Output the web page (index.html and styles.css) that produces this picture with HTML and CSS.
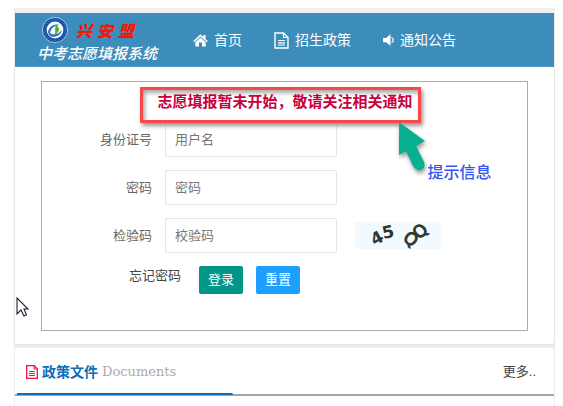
FILE: index.html
```html
<!DOCTYPE html>
<html lang="zh-CN">

<head>
    <meta charset="UTF-8">
    <meta name="viewport" content="width=device-width, initial-scale=1.0">
    <title>中考志愿填报系统</title>
    <link rel="stylesheet" href="styles.css">
</head>

<body>
    <div class="page">
        <header class="header">
            <a class="brand" href="#">
                <span class="brand-top">
                    <svg class="logo" viewBox="0 0 26 26" aria-hidden="true">
                        <circle cx="13" cy="13" r="12.6" fill="#1550a0" stroke="#dcecf8" stroke-width=".7"/>
                        <circle cx="13" cy="13" r="10.4" fill="none" stroke="#6d9cd0" stroke-width="1" stroke-dasharray="1 2"/>
                        <circle cx="13" cy="13" r="8.4" fill="#f2f9ff"/>
                        <path d="M6 15c1-6 7-9 12-7-4 0-9 2-10 8 4 3 9 1 12-3-1 6-9 9-13 5" fill="#2b6fc0"/>
                        <path d="M13 11c2-2 4-1 4 1s-2 5-5 6c2-3 1-4 1-7z" fill="#58a838"/>
                        <circle cx="14.500" cy="9" r="1.300" fill="#58a838"/>
                    </svg>
                    <span class="brand-name"><span>兴</span><span>安</span><span>盟</span></span>
                </span>
                <span class="brand-title">中考志愿填报系统</span>
            </a>
            <nav class="nav">
                <a href="#">
                    <svg width="15" height="13" viewBox="0 0 15 13" fill="#fff" aria-hidden="true">
                        <path d="M7.500 .3 10.500 3V1h2v3.900l2.300 2.100-.9 1.200L7.500 2.400 1.100 8.200.2 7z"/>
                        <path d="M7.500 3.500 12.700 8.200V12.500H9V8.500H6v4H2.300V8.200z"/>
                    </svg>
                    首页
                </a>
                <a href="#">
                    <svg width="15" height="17" viewBox="0 0 15 17" fill="none" stroke="#fff" aria-hidden="true">
                        <path d="M1 1h8.500L14 5.500V16H1z" stroke-width="1.400"/>
                        <path d="M9.500 1v4.500H14M4 8.500h7M4 10.800h7M4 13h7" stroke-width="1.200"/>
                    </svg>
                    招生政策
                </a>
                <a href="#">
                    <svg width="11" height="12" viewBox="0 0 11 12" aria-hidden="true">
                        <path d="M0 4h3l4.500-3.700v11.400L3 8.300H0z" fill="#fff"/>
                        <path d="M8.500 3.500c2.400.8 2.400 4.200 0 5" fill="none" stroke="#fff" stroke-width="1.300"/>
                    </svg>
                    通知公告
                </a>
            </nav>
        </header>

        <main>
            <section class="panel">
                <form class="login">
                    <div class="notice">志愿填报暂未开始，敬请关注相关通知</div>
                    <div class="row">
                        <label for="idcard">身份证号</label>
                        <input type="text" id="idcard" name="idcard" placeholder="用户名">
                    </div>
                    <div class="row">
                        <label for="password">密码</label>
                        <input type="password" id="password" name="password" placeholder="密码">
                    </div>
                    <div class="row">
                        <label for="code">检验码</label>
                        <input type="text" id="code" name="code" placeholder="校验码">
                        <svg class="captcha" viewBox="0 0 86 27" role="img" aria-label="验证码">
                            <g transform="translate(22 16) rotate(-28)"><text y="6">4</text></g>
                            <g transform="translate(33 10) rotate(-12)"><text y="6">5</text></g>
                            <g class="captcha-round" transform="translate(56 17) rotate(35)"><text y="6">Q</text></g>
                            <g class="captcha-round" transform="translate(65 9) rotate(-45)"><text y="6">Q</text></g>
                        </svg>
                    </div>
                    <div class="actions">
                        <a href="#">忘记密码</a>
                        <button type="submit" class="btn">登录</button>
                        <button type="reset" class="btn btn-reset">重置</button>
                    </div>

                    <div class="tip">
                        <svg width="34" height="54" viewBox="0 0 34 54" aria-hidden="true">
                            <path d="M3 3 29 22 20 27 28 43Q30 49 25 51Q20 52 17 47L10 32 3 36z" fill="#06b090"/>
                        </svg>
                        <span>提示信息</span>
                    </div>
                    <svg class="cursor" width="14" height="22" viewBox="0 0 14 22" aria-hidden="true">
                        <path d="M1 1v16l4-4 3 6 2.500-1.200L8 12h4z" fill="#fff" stroke="#20203a" stroke-width="1.100"/>
                    </svg>
                </form>
            </section>

            <section class="documents">
                <div class="documents-head">
                    <h2>
                        <svg width="12" height="14" viewBox="0 0 12 14" fill="none" stroke="#f5104a" aria-hidden="true">
                            <path d="M.7.7h7.500l3.100 3.100v9.500H.7z" stroke-width="1.300"/>
                            <path d="M8 .7V4h3.300M3 6.500h6M3 8.500h6M3 10.500h6"/>
                        </svg>
                        政策文件
                        <small>Documents</small>
                    </h2>
                    <a href="#">更多..</a>
                </div>
            </section>
        </main>
    </div>
</body>

</html>
```

FILE: styles.css
```css
* {
    margin: 0;
    padding: 0;
    box-sizing: border-box;
}

body {
    background: #fff;
    color: #444;
    font: 13px/20px "Liberation Sans", "Noto Sans CJK SC", sans-serif;
}

a {
    color: inherit;
    text-decoration: none;
}

.page {
    margin: 8px 8px 0 14px;
    padding: 5px 0 0;
    min-height: calc(100vh - 8px);
    border: 1px solid #ececec;
    border-width: 0 1px;
    background: #f0f0f0;
    display: flex;
    flex-direction: column;
}

main {
    flex: 1;
    display: flex;
    flex-direction: column;
}

/* header */
.header {
    display: flex;
    align-items: center;
    height: 54px;
    padding-left: 22px;
    background: #3c8dbc;
    color: #fff;
}

.brand-top {
    display: flex;
    align-items: center;
    gap: 8px;
    padding-left: 5px;
}

.logo {
    width: 26px;
    height: 26px;
}

.brand-name {
    display: flex;
    gap: 5px;
    color: #fa1405;
    font: italic 900 16px/22px "Noto Sans CJK SC", sans-serif;
}

.brand-title {
    display: block;
    font: italic 500 15px/20px "Noto Sans CJK SC", sans-serif;
}

.nav {
    display: flex;
    gap: 32px;
    margin-left: 36px;
    font-size: 14px;
}

.nav a {
    display: flex;
    align-items: center;
    gap: 6px;
    white-space: nowrap;
}

/* login */
.panel {
    padding: 14px 26px 13px;
    background: #fff;
    border-bottom-right-radius: 3px;
    box-shadow: 0 1px 3px #ddd;
}

.login {
    position: relative;
    display: flex;
    flex-direction: column;
    gap: 13px;
    padding: 5px 0 36px;
    border: 1px solid #aaa;
}

.notice {
    position: relative;
    z-index: 1;
    align-self: center;
    margin: 0 8px -14px 0;
    padding: 2px 5px 8px 14px;
    border: 3px solid #f94848;
    box-shadow: 2px 3px 4px #999, inset 2px 3px 4px #aaa;
    color: #c8003c;
    font-size: 15px;
    font-weight: bold;
}

.row {
    display: flex;
    align-items: center;
    color: #666;
}

.row label {
    width: 110px;
    margin-right: 13px;
    text-align: right;
}

.row input {
    width: 172px;
    height: 35px;
    padding: 0 9px;
    border: 1px solid #e6e6e6;
    border-radius: 2px;
    outline: none;
    font: inherit;
}

.row input::placeholder {
    color: #777;
}

.captcha {
    width: 86px;
    height: 27px;
    margin-left: 18px;
    overflow: visible;
    background: #f2faff;
    font: bold 17px "DejaVu Sans", sans-serif;
    fill: #30362b;
    text-anchor: middle;
}

.captcha-round {
    font-weight: normal;
    stroke: #30362b;
}

.actions {
    display: flex;
    gap: 13px;
    padding-left: 87px;
}

.actions a {
    margin-right: 5px;
}

.btn {
    width: 44px;
    height: 28px;
    border: none;
    border-radius: 2px;
    background: #009688;
    color: #fff;
    font: inherit;
}

.btn-reset {
    background: #1e9fff;
}

/* hint over the form */
.tip {
    position: absolute;
    z-index: 2;
    top: 37px;
    left: calc(50% + 111px);
    display: flex;
    align-items: flex-end;
    color: #3355f5;
    font-size: 16px;
    font-weight: 500;
    white-space: nowrap;
}

.tip svg {
    flex: none;
    margin-right: -2px;
    filter: drop-shadow(1px 3px 2px #999);
}

.tip span {
    margin-bottom: -10px;
}

.cursor {
    position: absolute;
    left: -26px;
    top: 215px;
}

/* documents */
.documents {
    flex: 1;
    margin-top: 4px;
    background: #fff;
    border-top-right-radius: 3px;
}

.documents-head {
    display: flex;
    align-items: center;
    justify-content: space-between;
    height: 48px;
    padding: 0 18px 0 11px;
    background:
        linear-gradient(#0e6eb8, #0e6eb8) 2px 45px / 40% 2px no-repeat,
        linear-gradient(#a5a5a5, #a5a5a5) 0 46px / 100% 2px no-repeat;
}

h2 {
    display: flex;
    align-items: center;
    gap: 4px;
    color: #0e6eb8;
    font-size: 14px;
    line-height: 20px;
}

h2 small {
    color: #aaa;
    font: 13px/20px "DejaVu Serif", serif;
}
```
